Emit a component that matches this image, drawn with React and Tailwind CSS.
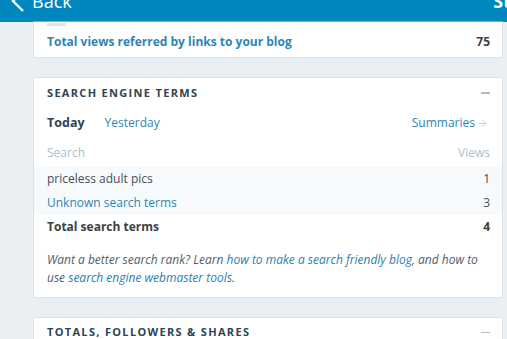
import { ArrowRight } from 'lucide-react'

const font = { fontFamily: '"Open Sans", "Noto Sans", sans-serif' }

function Card({ children, className = '' }) {
  return (
    <div className={`ml-[34px] mr-[5px] bg-white shadow-[0_0_0_1px_rgba(200,215,225,0.5),0_1px_2px_#e9eff3] ${className}`}>
      {children}
    </div>
  )
}

function CardTitle({ title, h = 'h-[30px]' }) {
  return (
    <div className={`flex items-center justify-between pl-[13px] pr-[12px] ${h}`}>
      <span className="text-[11px] font-bold tracking-[0.12em] text-[#2e4453]">{title}</span>
      <span className="w-[9px] h-[1.5px] bg-[#a8bece]" />
    </div>
  )
}

export default function App() {
  const rows = [
    { term: 'priceless adult pics', views: 1, shaded: true },
    { term: 'Unknown search terms', views: 3, shaded: true, link: true },
    { term: 'Total search terms', views: 4, bold: true },
  ]

  return (
    <div className="w-[507px] h-[339px] overflow-hidden bg-[#e9eff3]" style={font}>
      {/* top bar */}
      <div className="h-[22px] bg-[#0087be] flex items-end overflow-hidden">
        <div className="flex items-center w-full h-[34px] mb-[4px] pl-[11px] text-white">
          <svg width="14" height="22" viewBox="0 0 14 22" className="mr-[7px]">
            <path d="M12 1 L2 11 L12 21" fill="none" stroke="white" strokeWidth="2.4" />
          </svg>
          <span className="text-[18px] leading-none">Back</span>
          <span className="ml-auto text-[18px] font-bold leading-none mr-[-4px]">St</span>
        </div>
      </div>

      {/* referrers card tail */}
      <Card>
        <div className="pl-[13px] pt-[1px]">
          <div className="w-[19px] h-[3px] bg-[#dde5ea]" />
        </div>
        <div className="flex items-center justify-between pl-[13px] pr-[12px] h-[31px]">
          <span className="text-[12px] font-bold text-[#2e85b5]">Total views referred by links to your blog</span>
          <span className="text-[12px] font-bold text-[#3d4145]">75</span>
        </div>
      </Card>

      {/* search engine terms */}
      <Card className="mt-[21px]">
        <CardTitle title="SEARCH ENGINE TERMS" />
        <div className="flex items-center pl-[13px] pr-[14px] h-[30px] text-[12px]">
          <span className="font-bold text-[#2e4453] text-[12.5px]">Today</span>
          <span className="ml-[20px] text-[#2e85b5]">Yesterday</span>
          <span className="ml-auto flex items-center text-[#2e85b5]">
            Summaries
            <ArrowRight size={11} strokeWidth={1.5} className="ml-[2px] text-[#a8bece]" />
          </span>
        </div>
        <div className="flex items-center justify-between pl-[13px] pr-[12px] h-[29px] text-[12px] text-[#a8bece]">
          <span>Search</span>
          <span>Views</span>
        </div>
        {rows.map((r) => (
          <div
            key={r.term}
            className={`flex items-center justify-between pl-[13px] pr-[12px] h-[24px] text-[12px] ${r.shaded ? 'bg-[#f7fafc]' : ''}`}
          >
            <span className={r.bold ? 'font-bold text-[#3d4145]' : r.link ? 'text-[#2e85b5]' : 'text-[#464e55]'}>
              {r.term}
            </span>
            <span className={r.bold ? 'font-bold text-[#3d4145]' : 'text-[#464e55]'}>{r.views}</span>
          </div>
        ))}
        <p className="pl-[13px] pr-[20px] pt-[12px] pb-[10px] text-[12px] leading-[18px] italic text-[#50606c]">
          Want a better search rank? Learn{' '}
          <a className="text-[#2a80b0]">how to make a search friendly blog</a>, and how to use{' '}
          <a className="text-[#2a80b0]">search engine webmaster tools</a>.
        </p>
      </Card>

      {/* totals */}
      <Card className="mt-[21px]">
        <CardTitle title="TOTALS, FOLLOWERS & SHARES" h="h-[29px]" />
      </Card>
    </div>
  )
}
